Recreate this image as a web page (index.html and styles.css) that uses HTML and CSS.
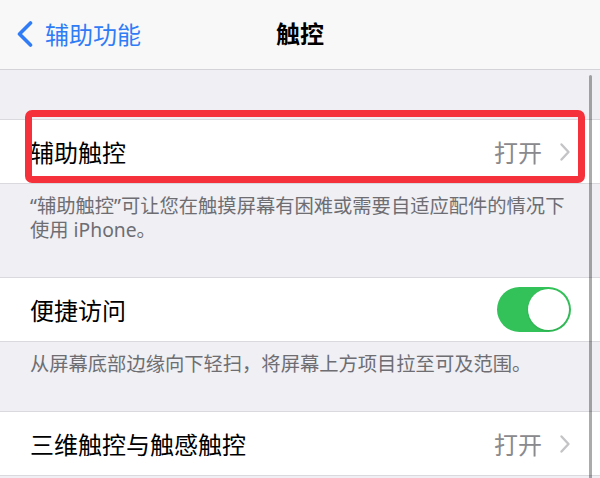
FILE: index.html
```html
<!DOCTYPE html>
<html lang="zh-CN">
<head>
<meta charset="utf-8">
<link rel="stylesheet" href="styles.css">
</head>
<body>
<div class="page">
  <header class="nav">
    <div class="back">
      <svg class="back-chev" width="18" height="26" viewBox="0 0 18 26"><path d="M14.5 2 L3.5 13 L14.5 24" fill="none" stroke="#2f7cf6" stroke-width="3.6" stroke-linecap="round" stroke-linejoin="round"/></svg>
      <span>辅助功能</span>
    </div>
    <div class="title">触控</div>
    <div></div>
  </header>

  <div class="gap-top"></div>

  <div class="row row-highlight">
    <span class="label">辅助触控</span>
    <span class="value">打开</span>
    <svg class="chev" width="12" height="20" viewBox="0 0 12 20"><path d="M2.5 2.5 L9.5 10 L2.5 17.5" fill="none" stroke="#c4c4c7" stroke-width="2.4" stroke-linecap="round" stroke-linejoin="round"/></svg>
    <div class="redbox"></div>
  </div>
  <div class="footer footer-two">“辅助触控”可让您在触摸屏幕有困难或需要自适应配件的情况下<br>使用 iPhone。</div>

  <div class="row">
    <span class="label">便捷访问</span>
    <div class="toggle"><div class="knob"></div></div>
  </div>
  <div class="footer">从屏幕底部边缘向下轻扫，将屏幕上方项目拉至可及范围。</div>

  <div class="row">
    <span class="label">三维触控与触感触控</span>
    <span class="value">打开</span>
    <svg class="chev" width="12" height="20" viewBox="0 0 12 20"><path d="M2.5 2.5 L9.5 10 L2.5 17.5" fill="none" stroke="#c4c4c7" stroke-width="2.4" stroke-linecap="round" stroke-linejoin="round"/></svg>
  </div>

  <div class="scrollbar"></div>
</div>
</body>
</html>
```

FILE: styles.css
```css
* { box-sizing: border-box; }
html, body { margin: 0; padding: 0; }
body {
  background: #efeff4;
  font-family: "Noto Sans CJK SC", "Noto Sans", sans-serif;
  width: 600px;
  height: 478px;
  overflow: hidden;
}
.page {
  position: relative;
  width: 600px;
  height: 478px;
  overflow: hidden;
}
.nav {
  height: 70px;
  background: #f8f8f8;
  border-bottom: 1px solid #d4d4d8;
  display: grid;
  grid-template-columns: 1fr auto 1fr;
  align-items: center;
}
.back {
  display: flex;
  align-items: center;
  padding-left: 16px;
  color: #2f7cf6;
  font-size: 24px;
  line-height: 30px;
  gap: 11px;
  padding-bottom: 2px;
}
.back-chev { display: block; }
.title {
  font-size: 24px;
  font-weight: 700;
  color: #000;
  line-height: 30px;
  padding-bottom: 3px;
}
.gap-top { height: 49px; }
.row {
  position: relative;
  height: 65px;
  background: #fff;
  border-top: 1px solid #d9d9de;
  border-bottom: 1px solid #d9d9de;
  display: flex;
  align-items: center;
  padding-left: 30px;
  padding-right: 29px;
}
.label {
  font-size: 24px;
  color: #000;
  line-height: 30px;
  flex: 1;
}
.value {
  font-size: 24px;
  color: #8a8a8e;
  line-height: 30px;
  margin-right: 17px;
}
.chev { display: block; }
.redbox {
  position: absolute;
  left: 25px;
  right: 15px;
  top: -10px;
  bottom: 0;
  border: 7px solid #f5323b;
  border-radius: 7px;
}
.footer {
  padding: 10px 10px 0 30px;
  height: 69px;
  font-family: "Noto Sans", "Noto Sans CJK SC", sans-serif;
  font-size: 19.3px;
  line-height: 24px;
  color: #6d6d72;
  white-space: nowrap;
}
.footer-two { height: 93px; }
.toggle {
  width: 74px;
  height: 45px;
  border-radius: 23px;
  background: #33c15a;
  display: flex;
  align-items: center;
  justify-content: flex-end;
  padding-right: 2px;
}
.knob {
  width: 41px;
  height: 41px;
  border-radius: 50%;
  background: #fff;
  box-shadow: 0 1px 2px rgba(0,0,0,0.12);
}
.scrollbar {
  position: absolute;
  left: 589px;
  top: 75px;
  width: 3px;
  height: 420px;
  border-radius: 2px;
  background: rgba(0,0,0,0.33);
}
```
